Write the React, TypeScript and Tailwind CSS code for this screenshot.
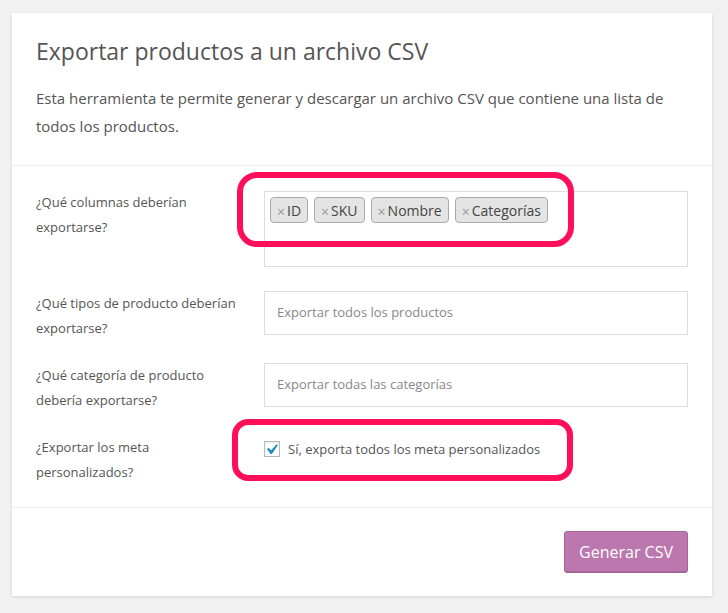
import React from "react";

const font = { fontFamily: '"Open Sans", "Noto Sans", sans-serif' };

const columns = ["ID", "SKU", "Nombre", "Categorías"];

function Chip({ label }: { label: string }) {
  return (
    <span className="flex h-[26px] items-center rounded-[4px] border border-[#aaaaaa] bg-[#e4e4e4] pl-[6px] pr-[6px] text-[14px] text-[#444]">
      <span className="mr-[2px] mt-[3px] text-[14px] leading-none text-[#999]">×</span>
      {label}
    </span>
  );
}

function Row({ label, children, className = "" }: { label: React.ReactNode; children: React.ReactNode; className?: string }) {
  return (
    <div className={`flex items-start ${className}`}>
      <div className="w-[228px] shrink-0 pr-4 text-[13px] leading-[25px] text-[#555]">{label}</div>
      <div className="flex-1">{children}</div>
    </div>
  );
}

export default function App() {
  return (
    <div className="min-h-[613px] bg-[#f1f1f1] pl-[12px] pt-[13px]" style={font}>
      <div className="relative w-[700px] bg-white shadow-[0_1px_3px_rgba(0,0,0,0.13)]">
        {/* header */}
        <div className="border-b border-[#eeeeee] px-[24px] pb-[25px] pt-[22px]">
          <h2 className="text-[23px] leading-[32px] text-[#555]">Exportar productos a un archivo CSV</h2>
          <p className="mt-[17px] text-[15px] leading-[28px] text-[#555]">
            Esta herramienta te permite generar y descargar un archivo CSV que contiene una lista de todos los productos.
          </p>
        </div>

        {/* form */}
        <div className="border-b border-[#eeeeee] px-[24px] pb-[22px] pt-[24px]">
          <Row label={<>¿Qué columnas deberían<br />exportarse?</>}>
            <div className="mt-[1px] flex h-[76px] flex-wrap content-start gap-[6px] border border-[#dddddd] p-[5px]">
              {columns.map((c) => (
                <Chip key={c} label={c} />
              ))}
            </div>
          </Row>

          <Row className="mt-[24px]" label={<>¿Qué tipos de producto deberían<br />exportarse?</>}>
            <div className="flex h-[44px] items-center border border-[#dddddd] pl-[12px] text-[13px] text-[#888]">
              Exportar todos los productos
            </div>
          </Row>

          <Row className="mt-[22px]" label={<>¿Qué categoría de producto<br />debería exportarse?</>}>
            <div className="flex h-[44px] items-center border border-[#dddddd] pl-[12px] text-[13px] text-[#888]">
              Exportar todas las categorías
            </div>
          </Row>

          <Row className="mt-[22px]" label={<>¿Exportar los meta<br />personalizados?</>}>
            <label className="mt-[5px] flex items-center text-[13px] leading-[18px] text-[#555]">
              <span className="relative mr-[8px] h-[16px] w-[16px] border border-[#b4b9be] bg-white shadow-[inset_0_1px_2px_rgba(0,0,0,0.1)]">
                <svg viewBox="0 0 20 20" className="absolute left-[-4px] top-[-3px] h-[21px] w-[21px]">
                  <path d="M14.83 4.89l1.34.94-5.81 8.38H9.02L5.78 9.67l1.34-1.25 2.57 2.4z" fill="#1e8cbe" />
                </svg>
              </span>
              Sí, exporta todos los meta personalizados
            </label>
          </Row>
        </div>

        {/* footer */}
        <div className="flex justify-end px-[24px] pb-[23px] pt-[23px]">
          <button className="h-[42px] w-[124px] rounded-[3px] border border-[#a36597] bg-[#bb77ae] text-[16px] text-white shadow-[inset_0_-1px_0_#a36597]">
            Generar CSV
          </button>
        </div>

        {/* highlights */}
        <div className="pointer-events-none absolute left-[225px] top-[159px] h-[75px] w-[337px] rounded-[20px] border-[6px] border-[#ff0f5a]" />
        <div className="pointer-events-none absolute left-[220px] top-[406px] h-[62px] w-[341px] rounded-[16px] border-[6px] border-[#ff0f5a]" />
      </div>
    </div>
  );
}
